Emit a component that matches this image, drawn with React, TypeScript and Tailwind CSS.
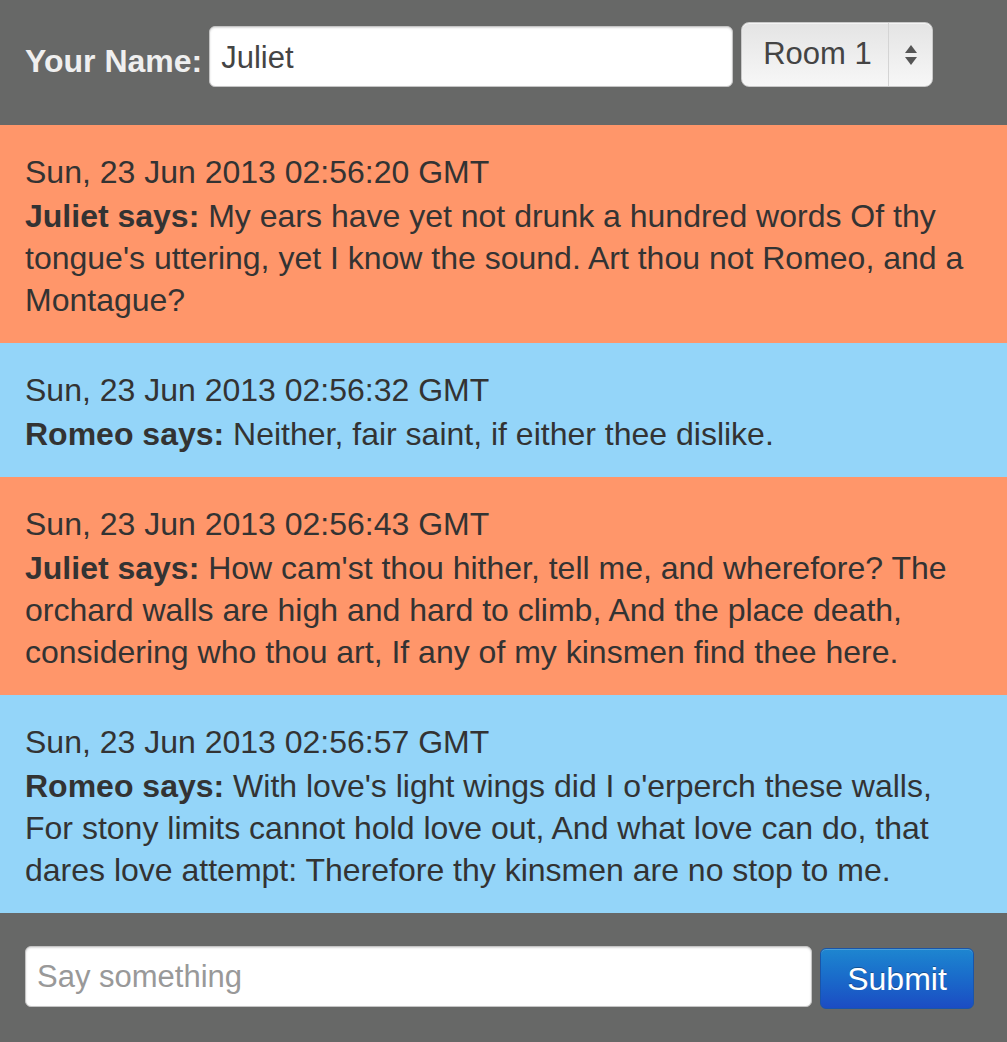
import React from "react";

const messages = [
  {
    time: "Sun, 23 Jun 2013 02:56:20 GMT",
    name: "Juliet",
    text: "My ears have yet not drunk a hundred words Of thy tongue's uttering, yet I know the sound. Art thou not Romeo, and a Montague?",
  },
  {
    time: "Sun, 23 Jun 2013 02:56:32 GMT",
    name: "Romeo",
    text: "Neither, fair saint, if either thee dislike.",
  },
  {
    time: "Sun, 23 Jun 2013 02:56:43 GMT",
    name: "Juliet",
    text: "How cam'st thou hither, tell me, and wherefore? The orchard walls are high and hard to climb, And the place death, considering who thou art, If any of my kinsmen find thee here.",
  },
  {
    time: "Sun, 23 Jun 2013 02:56:57 GMT",
    name: "Romeo",
    text: "With love's light wings did I o'erperch these walls, For stony limits cannot hold love out, And what love can do, that dares love attempt: Therefore thy kinsmen are no stop to me.",
  },
];

function Message({ time, name, text }: { time: string; name: string; text: string }) {
  const bg = name === "Juliet" ? "bg-[#ff966a]" : "bg-[#94d5f9]";
  return (
    <div className={`${bg} px-[25px] pt-[26px] pb-[22px] text-[32px] leading-[42px] text-[#333]`}>
      <div className="mb-[2px]">{time}</div>
      <div>
        <b>{name} says:</b> {text}
      </div>
    </div>
  );
}

export default function App() {
  return (
    <div className="w-[1007px] font-['Liberation_Sans',Arial,sans-serif]">
      <div className="flex items-start h-[125px] bg-[#676867] px-[25px] pt-[22px]">
        <label className="mt-[18px] text-[32px] leading-[42px] font-bold text-[#efefef]">
          Your Name:
        </label>
        <input
          defaultValue="Juliet"
          className="ml-[7px] mt-[4px] h-[61px] w-[524px] rounded-[6px] border border-[#c4c4c4] bg-white px-[11px] pt-[2px] text-[31px] text-[#444] shadow-[inset_0_1px_2px_rgba(0,0,0,0.15)] outline-none"
        />
        <div className="ml-[8px] flex h-[65px] w-[192px] rounded-[8px] border border-[#c8c8c8] bg-gradient-to-b from-[#e4e4e4] to-[#f7f7f7] shadow-[inset_0_1px_0_rgba(255,255,255,0.6)]">
          <div className="flex flex-1 items-center pl-[21px] text-[31px] text-[#444]">Room 1</div>
          <div className="flex w-[44px] items-center justify-center border-l border-[#d4d4d4]">
            <svg width="14" height="22" viewBox="0 0 14 22">
              <path d="M7 1 L13 9 L1 9 Z" fill="#555" />
              <path d="M1 13 L13 13 L7 21 Z" fill="#555" />
            </svg>
          </div>
        </div>
      </div>

      {messages.map((m) => (
        <Message key={m.time} {...m} />
      ))}

      <div className="flex items-start h-[129px] bg-[#676867] px-[25px] pt-[33px]">
        <input
          placeholder="Say something"
          className="h-[61px] w-[787px] rounded-[6px] border border-[#c4c4c4] bg-white px-[11px] text-[31px] text-[#555] placeholder:text-[#999] shadow-[inset_0_1px_2px_rgba(0,0,0,0.15)] outline-none"
        />
        <button className="ml-[8px] mt-[2px] h-[61px] w-[154px] rounded-[6px] border border-[#1a55a8] bg-gradient-to-b from-[#1e86d0] to-[#1c4cc3] text-[32px] text-white [text-shadow:0_-1px_0_rgba(0,0,0,0.3)] shadow-[inset_0_1px_0_rgba(255,255,255,0.2)]">
          Submit
        </button>
      </div>
    </div>
  );
}
